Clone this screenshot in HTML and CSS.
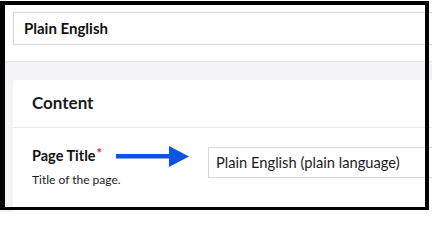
FILE: index.html
```html
<!DOCTYPE html>
<html>
<head>
<meta charset="utf-8">
<link rel="stylesheet" href="styles.css">
</head>
<body>
<div class="page">
  <div class="top">
    <div class="name-input">Plain English</div>
  </div>
  <div class="main">
    <div class="card">
      <div class="card-header">Content</div>
      <div class="prop">
        <div class="prop-label">
          <div class="label">Page Title<span class="req">*</span></div>
          <div class="desc">Title of the page.</div>
        </div>
        <div class="text-input">Plain English (plain language)</div>
      </div>
    </div>
  </div>
  <svg class="arrow" width="74" height="22" viewBox="0 0 74 22">
    <rect x="0" y="8" width="56" height="4.5" fill="#0a55e0"/>
    <polygon points="53,0 73,10.5 53,21" fill="#0a55e0"/>
  </svg>
  <div class="frame"></div>
</div>
</body>
</html>
```
FILE: styles.css
```css
html, body {
  margin: 0;
  padding: 0;
  background: #ffffff;
}
body {
  width: 432px;
  height: 212px;
  overflow: hidden;
  font-family: Lato, "Open Sans", sans-serif;
  color: #1b1b1f;
}
.page {
  position: relative;
  width: 432px;
  height: 212px;
  overflow: hidden;
}
.top {
  padding: 12px 0 0 13px;
  height: 50px;
  box-sizing: border-box;
  background: #ffffff;
}
.name-input {
  height: 33px;
  box-sizing: border-box;
  border: 1px solid #d8d7d9;
  margin-right: -60px;
  padding-left: 10px;
  font-size: 15px;
  font-weight: 700;
  line-height: 31px;
  color: #111;
}
.main {
  background: #f3f3f5;
  border-top: 1px solid #e6e6e8;
  margin-top: 11px;
  padding: 18px 0 0 13px;
  height: 160px;
}
.card {
  background: #ffffff;
  border-radius: 3px 0 0 0;
  margin-right: -60px;
  height: 200px;
}
.card-header {
  padding: 13px 19px 14px;
  font-size: 17px;
  font-weight: 700;
  line-height: 20px;
  border-bottom: 1px solid #e9e9eb;
  color: #1b1b1f;
}
.prop {
  display: flex;
  align-items: flex-start;
  padding: 18px 19px 0;
}
.prop-label {
  width: 176px;
  flex: none;
}
.label {
  font-size: 14.5px;
  font-weight: 700;
  line-height: 20px;
  color: #111;
}
.req {
  color: #d42054;
  font-size: 13px;
  vertical-align: top;
  line-height: 14px;
  margin-left: 1px;
}
.desc {
  font-size: 12px;
  line-height: 18px;
  margin-top: 5px;
  color: #1b1b1f;
}
.text-input {
  flex: 1;
  margin-top: 1px;
  height: 31px;
  box-sizing: border-box;
  border: 1px solid #d8d7d9;
  border-right: none;
  padding-left: 7px;
  font-size: 14.7px;
  line-height: 29px;
  color: #1b1b1f;
}
.arrow {
  position: absolute;
  left: 116px;
  top: 146px;
}
.frame {
  position: absolute;
  left: 0;
  top: 1px;
  width: 429px;
  height: 209px;
  box-sizing: border-box;
  border-style: solid;
  border-color: #000;
  border-width: 4px 4px 3px 5px;
  pointer-events: none;
}
```
